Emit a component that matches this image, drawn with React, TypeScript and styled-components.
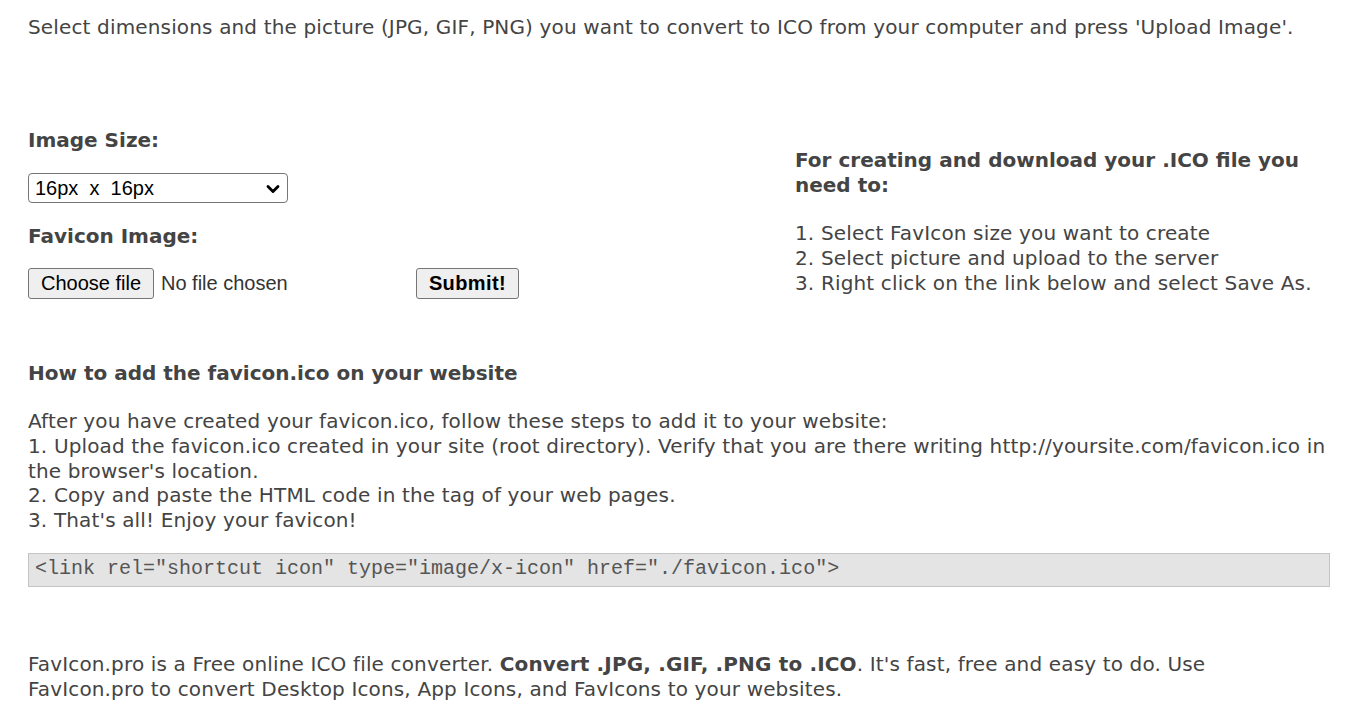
import React from 'react'
import styled, { createGlobalStyle } from 'styled-components'
import { ChevronDown } from 'lucide-react'

const GlobalStyle = createGlobalStyle`
  body {
    margin: 0;
    background: #fff;
    font-family: "DejaVu Sans", Verdana, sans-serif;
    color: #444;
  }
`

export default function App() {
  return (
    <Page>
      <GlobalStyle />
      <Intro>
        Select dimensions and the picture (JPG, GIF, PNG) you want to convert to ICO from your computer and press 'Upload Image'.
      </Intro>

      <Columns>
        <FormColumn>
          <Label>Image Size:</Label>
          <SelectWrap>
            <SizeSelect defaultValue="16">
              <option value="16">16px&nbsp; x &nbsp;16px</option>
              <option value="32">32px&nbsp; x &nbsp;32px</option>
              <option value="48">48px&nbsp; x &nbsp;48px</option>
            </SizeSelect>
            <SelectArrow size={20} strokeWidth={3.4} />
          </SelectWrap>
          <Label $gap={21}>Favicon Image:</Label>
          <UploadRow>
            <FilePicker>
              <FileButton type="button">Choose file</FileButton>
              <FileName>No file chosen</FileName>
            </FilePicker>
            <SubmitButton type="button">Submit!</SubmitButton>
          </UploadRow>
        </FormColumn>

        <StepsColumn>
          <StepsTitle>For creating and download your .ICO file you need to:</StepsTitle>
          <Steps>
            1. Select FavIcon size you want to create
            <br />
            2. Select picture and upload to the server
            <br />
            3. Right click on the link below and select Save As.
          </Steps>
        </StepsColumn>
      </Columns>

      <SectionTitle>How to add the favicon.ico on your website</SectionTitle>
      <Paragraph>
        After you have created your favicon.ico, follow these steps to add it to your website:
        <br />
        1. Upload the favicon.ico created in your site (root directory). Verify that you are there writing http://yoursite.com/favicon.ico in the browser's location.
        <br />
        2. Copy and paste the HTML code in the tag of your web pages.
        <br />
        3. That's all! Enjoy your favicon!
      </Paragraph>

      <CodeBox>{'<link rel="shortcut icon" type="image/x-icon" href="./favicon.ico">'}</CodeBox>

      <Footer>
        FavIcon.pro is a Free online ICO file converter. <strong>Convert .JPG, .GIF, .PNG to .ICO</strong>. It's fast, free and easy to do. Use FavIcon.pro to convert Desktop Icons, App Icons, and FavIcons to your websites.
      </Footer>
    </Page>
  )
}

const Page = styled.div`
  padding: 15px 19px 0 28px;
  font-size: 20px;
  line-height: 24.75px;
  letter-spacing: 0.15px;
`

const Intro = styled.p`
  margin: 0;
`

const Columns = styled.div`
  display: grid;
  grid-template-columns: 767px 1fr;
  align-items: start;
  margin-top: 76px;
`

const FormColumn = styled.div`
  display: flex;
  flex-direction: column;
  align-items: flex-start;
`

const Label = styled.div<{ $gap?: number }>`
  font-weight: bold;
  letter-spacing: 0;
  margin: ${(p) => p.$gap ?? 12}px 0 20px;
`

const SelectWrap = styled.div`
  position: relative;
  width: 260px;
  height: 30px;
`

const SizeSelect = styled.select`
  appearance: none;
  width: 100%;
  height: 100%;
  font-family: "Liberation Sans", Arial, sans-serif;
  font-size: 20px;
  color: #000;
  border: 1px solid #767676;
  border-radius: 4px;
  background: #fff;
  padding: 0 6px;
`

const SelectArrow = styled(ChevronDown)`
  position: absolute;
  right: 5px;
  top: 6px;
  color: #000;
  pointer-events: none;
`

const UploadRow = styled.div`
  display: flex;
  align-items: center;
`

const FilePicker = styled.div`
  display: flex;
  align-items: center;
  width: 388px;
  font-family: "Liberation Sans", Arial, sans-serif;
  font-size: 20px;
  letter-spacing: 0;
`

const FileButton = styled.button`
  height: 31px;
  width: 126px;
  padding: 0;
  font-family: "Liberation Sans", Arial, sans-serif;
  font-size: 20px;
  color: #000;
  background: #efefef;
  border: 1px solid #767676;
  border-radius: 3px;
`

const FileName = styled.span`
  margin-left: 7px;
  color: #333;
`

const SubmitButton = styled.button`
  height: 31px;
  width: 103px;
  padding: 0;
  font-family: "Liberation Sans", Arial, sans-serif;
  font-size: 20px;
  font-weight: bold;
  letter-spacing: 0.4px;
  color: #000;
  background: #efefef;
  border: 1px solid #767676;
  border-radius: 3px;
`

const StepsColumn = styled.div`
  padding-top: 32px;
`

const StepsTitle = styled.div`
  font-weight: bold;
  letter-spacing: 0;
  width: 520px;
`

const Steps = styled.p`
  margin: 24px 0 0;
`

const SectionTitle = styled.div`
  font-weight: bold;
  letter-spacing: 0;
  margin-top: 62px;
`

const Paragraph = styled.p`
  margin: 23px 0 0;
`

const CodeBox = styled.div`
  margin: 20px 0 0;
  height: 34px;
  box-sizing: border-box;
  display: flex;
  align-items: center;
  padding: 0 6px;
  background: #e4e4e4;
  border: 1px solid #c4c4c4;
  font-family: "Liberation Mono", "Courier New", monospace;
  font-size: 20px;
  letter-spacing: 0;
  color: #555;
`

const Footer = styled.p`
  margin: 65px 0 0;
  padding-right: 16px;
`
